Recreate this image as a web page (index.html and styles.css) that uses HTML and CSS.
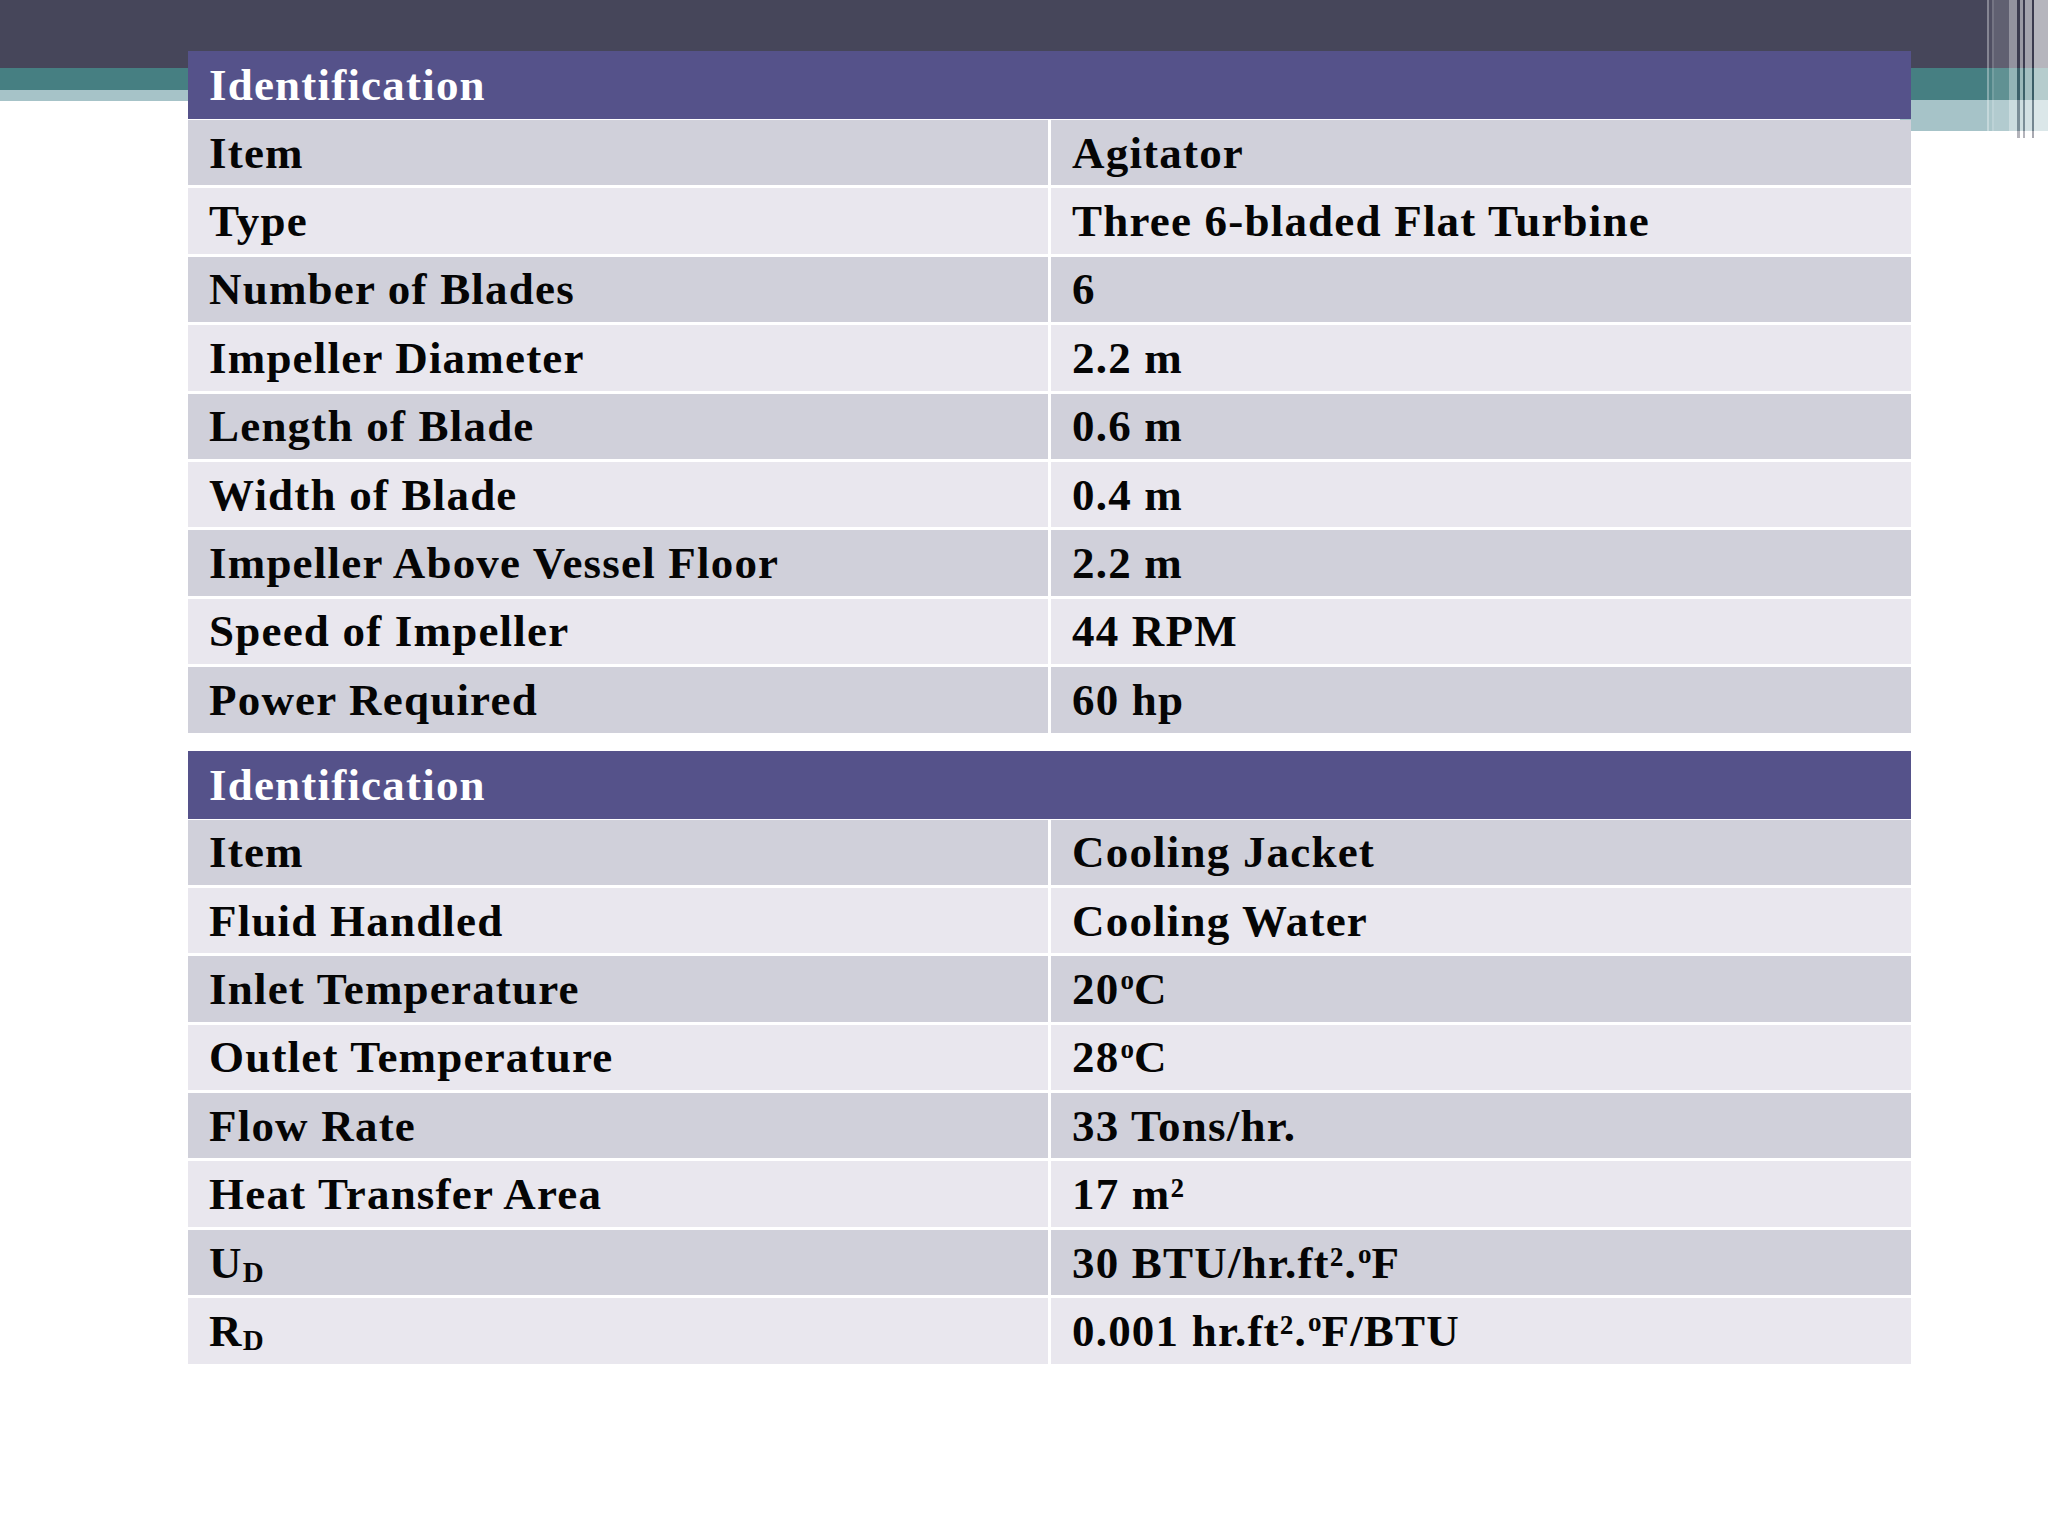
FILE: index.html
```html
<!DOCTYPE html>
<html>
<head>
<meta charset="utf-8">
<link rel="stylesheet" href="styles.css">
</head>
<body>
<div class="deco" aria-hidden="true">
  <div class="deco-bar"></div>
  <div class="deco-band-left"></div>
  <div class="deco-band-right"></div>
  <div class="deco-stripes"></div>
</div>
<main class="slide">
  <section class="spec">
    <div class="spec-head">Identification</div>
    <div class="spec-row dark"><div class="cell">Item</div><div class="cell">Agitator</div></div>
    <div class="spec-row light"><div class="cell">Type</div><div class="cell">Three 6-bladed Flat Turbine</div></div>
    <div class="spec-row dark"><div class="cell">Number of Blades</div><div class="cell">6</div></div>
    <div class="spec-row light"><div class="cell">Impeller Diameter</div><div class="cell">2.2 m</div></div>
    <div class="spec-row dark"><div class="cell">Length of Blade</div><div class="cell">0.6 m</div></div>
    <div class="spec-row light"><div class="cell">Width of Blade</div><div class="cell">0.4 m</div></div>
    <div class="spec-row dark"><div class="cell">Impeller Above Vessel Floor</div><div class="cell">2.2 m</div></div>
    <div class="spec-row light"><div class="cell">Speed of Impeller</div><div class="cell">44 RPM</div></div>
    <div class="spec-row dark"><div class="cell">Power Required</div><div class="cell">60 hp</div></div>
  </section>
  <section class="spec">
    <div class="spec-head">Identification</div>
    <div class="spec-row dark"><div class="cell">Item</div><div class="cell">Cooling Jacket</div></div>
    <div class="spec-row light"><div class="cell">Fluid Handled</div><div class="cell">Cooling Water</div></div>
    <div class="spec-row dark"><div class="cell">Inlet Temperature</div><div class="cell">20<sup class="deg">o</sup>C</div></div>
    <div class="spec-row light"><div class="cell">Outlet Temperature</div><div class="cell">28<sup class="deg">o</sup>C</div></div>
    <div class="spec-row dark"><div class="cell">Flow Rate</div><div class="cell">33 Tons/hr.</div></div>
    <div class="spec-row light"><div class="cell">Heat Transfer Area</div><div class="cell">17 m²</div></div>
    <div class="spec-row dark"><div class="cell">U<sub class="sub">D</sub></div><div class="cell">30 BTU/hr.ft².<sup class="deg">o</sup>F</div></div>
    <div class="spec-row light"><div class="cell">R<sub class="sub">D</sub></div><div class="cell">0.001 hr.ft².<sup class="deg">o</sup>F/BTU</div></div>
  </section>
</main>
</body>
</html>
```

FILE: styles.css
```css
html, body {
  margin: 0;
  padding: 0;
  background: #ffffff;
}

body {
  width: 2048px;
  height: 1536px;
  position: relative;
  overflow: hidden;
  font-family: "Liberation Serif", "Times New Roman", serif;
}

/* decorative header band (background layer) */
.deco {
  position: absolute;
  left: 0;
  top: 0;
  width: 2048px;
  height: 140px;
}
.deco-bar {
  position: absolute;
  left: 0;
  top: 0;
  width: 2048px;
  height: 68px;
  background: #46465a;
}
.deco-band-left {
  position: absolute;
  left: 0;
  top: 68px;
  width: 200px;
  height: 33px;
  background: linear-gradient(to bottom, #467f82 0, #467f82 22px, #a6c3c8 22px, #a6c3c8 33px);
}
.deco-band-right {
  position: absolute;
  left: 1900px;
  top: 68px;
  width: 148px;
  height: 63px;
  background: linear-gradient(to bottom, #467f82 0, #467f82 32px, #a6c3c8 32px, #a6c3c8 63px);
}
.deco-stripes {
  position: absolute;
  left: 1987px;
  top: 0;
  width: 61px;
  height: 138px;
  background: linear-gradient(to right,
    rgba(255,255,255,0.35) 0, rgba(255,255,255,0.35) 2px,
    rgba(255,255,255,0.05) 2px, rgba(255,255,255,0.05) 5px,
    rgba(255,255,255,0.25) 5px, rgba(255,255,255,0.25) 7px,
    rgba(255,255,255,0.14) 7px, rgba(255,255,255,0.14) 22px,
    rgba(255,255,255,0.42) 22px, rgba(255,255,255,0.42) 30px,
    rgba(40,40,60,0.35) 30px, rgba(40,40,60,0.35) 33px,
    rgba(255,255,255,0.45) 33px, rgba(255,255,255,0.45) 36px,
    rgba(40,40,60,0.35) 36px, rgba(40,40,60,0.35) 38px,
    rgba(255,255,255,0.5) 38px, rgba(255,255,255,0.5) 45px,
    rgba(40,40,60,0.4) 45px, rgba(40,40,60,0.4) 47px,
    rgba(255,255,255,0.6) 47px, rgba(255,255,255,0.6) 61px);
  -webkit-mask: linear-gradient(to right, #000 0, #000 23px, transparent 23px) top left / 100% 131px no-repeat,
                linear-gradient(#000, #000) 23px 0 / 38px 138px no-repeat;
}

/* slide content */
.slide {
  position: relative;
  padding: 51px 136px 0 188px;
  display: flex;
  flex-direction: column;
  gap: 18px;
}

.spec {
  width: 1723px;
  display: flex;
  flex-direction: column;
  gap: 3px;
}

.spec-head {
  height: 68px;
  margin-bottom: -2px;
  background: #55528a;
  color: #ffffff;
  font-weight: 700;
  font-size: 45px;
  letter-spacing: 1.2px;
  display: flex;
  align-items: center;
  padding-left: 21px;
}

.spec-row {
  height: 65.4px;
  display: grid;
  grid-template-columns: 860px 1fr;
  column-gap: 3px;
}

.cell {
  display: flex;
  align-items: center;
  padding-left: 21px;
  font-weight: 700;
  font-size: 45px;
  letter-spacing: 1.2px;
  color: #050505;
  white-space: nowrap;
}

.spec-row.dark .cell { background: #d0d0da; }
.spec-row.light .cell { background: #e9e7ee; }

.deg {
  font-size: 27px;
  position: relative;
  top: -8px;
  vertical-align: baseline;
  letter-spacing: 0;
  margin-left: 1px;
}

.sub {
  font-size: 29px;
  position: relative;
  top: 10px;
  vertical-align: baseline;
  letter-spacing: 0;
}
```
